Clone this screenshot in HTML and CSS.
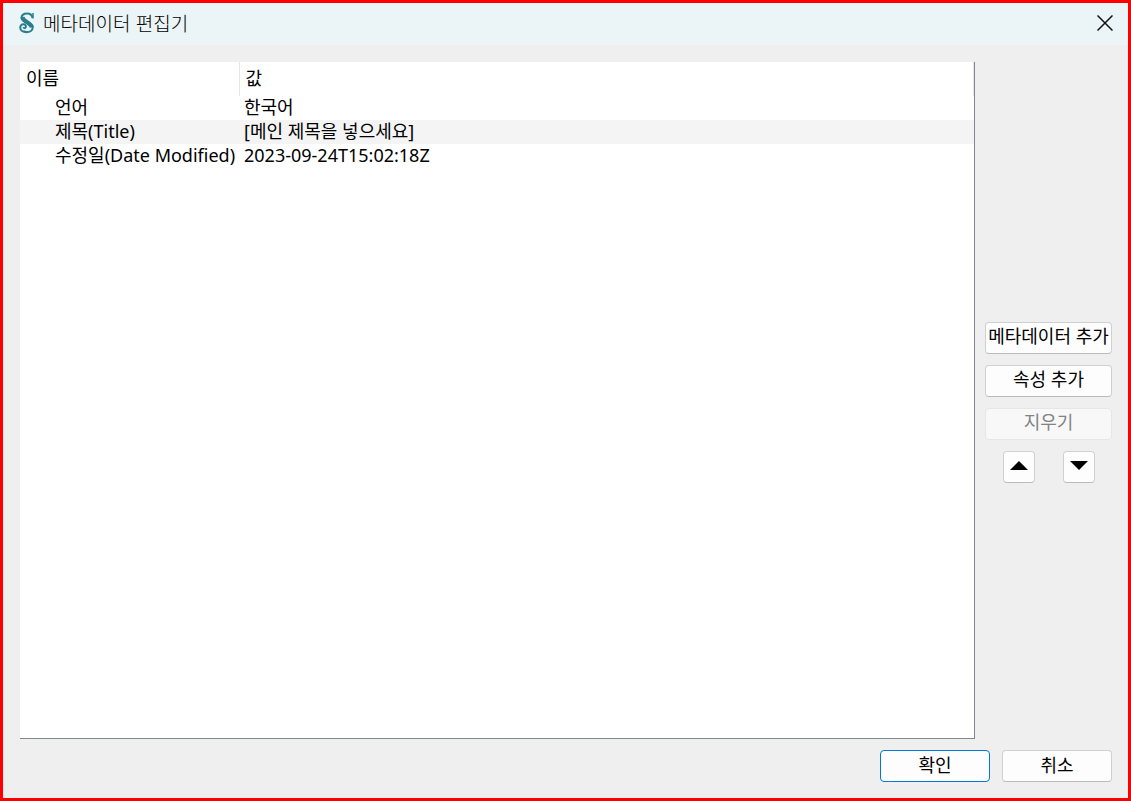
FILE: index.html
```html
<!DOCTYPE html>
<html lang="ko">
<head>
    <meta charset="UTF-8">
    <meta name="viewport" content="width=device-width, initial-scale=1.0">
    <title>메타데이터 편집기</title>
    <link rel="stylesheet" href="styles.css">
</head>
<body>
    <div class="dialog">
        <header class="titlebar">
            <svg class="logo" viewBox="0 0 16 22" aria-hidden="true">
                <path class="logo-body" d="M13.500 6C13 2.800 10.800 1.500 8.200 1.500C4.800 1.500 2.500 3.200 2.500 6C2.500 11 13.800 9.500 13.800 15C13.800 18.500 10.800 20.200 7.500 20.200C4 20.200 1.200 18.500 1.200 15.500C1.200 13.300 3 12 4.800 12.300C6.600 12.600 7.300 14.200 6.700 15.400C6.200 16.400 4.600 16.400 4.400 15.200"/>
                <path class="logo-swell" d="M3.500 5C4 10 12 10.500 12.800 15.500"/>
                <path class="logo-tip" d="M14 1V6.500M4.500 19L9 20.200"/>
            </svg>
            <h1>메타데이터 편집기</h1>
            <button class="close" type="button" aria-label="닫기">
                <svg viewBox="0 0 16 16" aria-hidden="true"><path d="M0.500 0.500L15.500 15.500M15.500 0.500L0.500 15.500"/></svg>
            </button>
        </header>

        <main class="content">
            <div class="list">
                <table>
                    <thead>
                        <tr><th class="name">이름</th><th>값</th></tr>
                    </thead>
                    <tbody>
                        <tr><td>언어</td><td>한국어</td></tr>
                        <tr class="alt"><td>제목(Title)</td><td>[메인 제목을 넣으세요]</td></tr>
                        <tr><td>수정일(Date Modified)</td><td>2023-09-24T15:02:18Z</td></tr>
                    </tbody>
                </table>
            </div>
            <div class="side">
                <button class="btn" type="button">메타데이터 추가</button>
                <button class="btn" type="button">속성 추가</button>
                <button class="btn" type="button" disabled>지우기</button>
                <div class="arrows">
                    <button class="btn arrow" type="button" aria-label="위로">
                        <svg viewBox="0 0 18 9" aria-hidden="true"><path d="M0 9L9 0L18 9Z"/></svg>
                    </button>
                    <button class="btn arrow" type="button" aria-label="아래로">
                        <svg viewBox="0 0 18 9" aria-hidden="true"><path d="M0 0H18L9 9Z"/></svg>
                    </button>
                </div>
            </div>
        </main>

        <footer class="actions">
            <button class="btn primary" type="button">확인</button>
            <button class="btn" type="button">취소</button>
        </footer>
    </div>
</body>
</html>
```
FILE: styles.css
```css
:root {
    --frame: #ff0000;
    --bg: #efefef;
    --titlebar: #ebf4f7;
    --line: #d0d0d0;
    --edge: #828790;
    --accent: #0078d4;
    --logo: #2a7f8e;
}

* {
    box-sizing: border-box;
    margin: 0;
    padding: 0;
}

body {
    font-family: "Noto Sans", "Noto Sans CJK KR", sans-serif;
    font-size: 18px;
    line-height: 22px;
    color: #000;
    background: var(--bg);
}

button {
    font: inherit;
    color: inherit;
}

svg {
    display: block;
}

.dialog {
    display: flex;
    flex-direction: column;
    min-height: 100vh;
    border: 3px solid var(--frame);
}

.titlebar {
    display: flex;
    align-items: center;
    height: 42px;
    padding: 0 14px 3px 16px;
    background: var(--titlebar);
}

.titlebar h1 {
    flex: 1;
    margin-left: 8px;
    font-family: "Noto Sans CJK KR", sans-serif;
    font-size: 19px;
    font-weight: 300;
}

.logo {
    width: 16px;
    height: 22px;
    fill: none;
    stroke: var(--logo);
}

.logo-body {
    stroke-width: 2;
}

.logo-swell {
    stroke-width: 4;
}

.logo-tip {
    stroke-width: 1.5;
}

.close {
    padding: 1px;
    border: none;
    background: none;
}

.close svg {
    width: 16px;
    height: 16px;
    fill: none;
    stroke: #111;
    stroke-width: 1.5;
}

.content {
    flex: 1;
    display: flex;
    gap: 10px;
    padding: 17px 16px 0 17px;
}

.list {
    flex: 1;
    background: #fff;
    border-right: 1px solid var(--edge);
    border-bottom: 1px solid var(--edge);
}

table {
    width: 100%;
    border-collapse: collapse;
    table-layout: fixed;
}

th {
    height: 34px;
    padding: 0 6px 2px;
    border-right: 1px solid #e5e5e5;
    font-weight: 400;
    text-align: left;
}

.name {
    width: 219px;
}

td {
    height: 24px;
    padding: 0 0 2px 5px;
    white-space: nowrap;
}

td:first-child {
    padding-left: 35px;
}

.alt {
    background: #f4f4f4;
}

.side {
    display: flex;
    flex-direction: column;
    justify-content: center;
    gap: 11px;
    width: 127px;
    padding-top: 3px;
}

.btn {
    height: 32px;
    padding: 0 0 3px;
    border: 1px solid var(--line);
    border-bottom-color: #bbb;
    border-radius: 4px;
    background: #fdfdfd;
    white-space: nowrap;
}

.btn:disabled {
    color: #838383;
    background: #f8f8f8;
    border-color: #e6e6e6;
}

.arrows {
    display: flex;
    justify-content: center;
    gap: 28px;
}

.arrow {
    display: flex;
    align-items: center;
    justify-content: center;
    width: 32px;
}

.arrow svg {
    width: 18px;
    height: 9px;
}

.actions {
    display: flex;
    justify-content: flex-end;
    gap: 12px;
    padding: 11px 16px 16px;
}

.actions .btn {
    width: 110px;
}

.actions .primary {
    border-color: var(--accent);
}
```
